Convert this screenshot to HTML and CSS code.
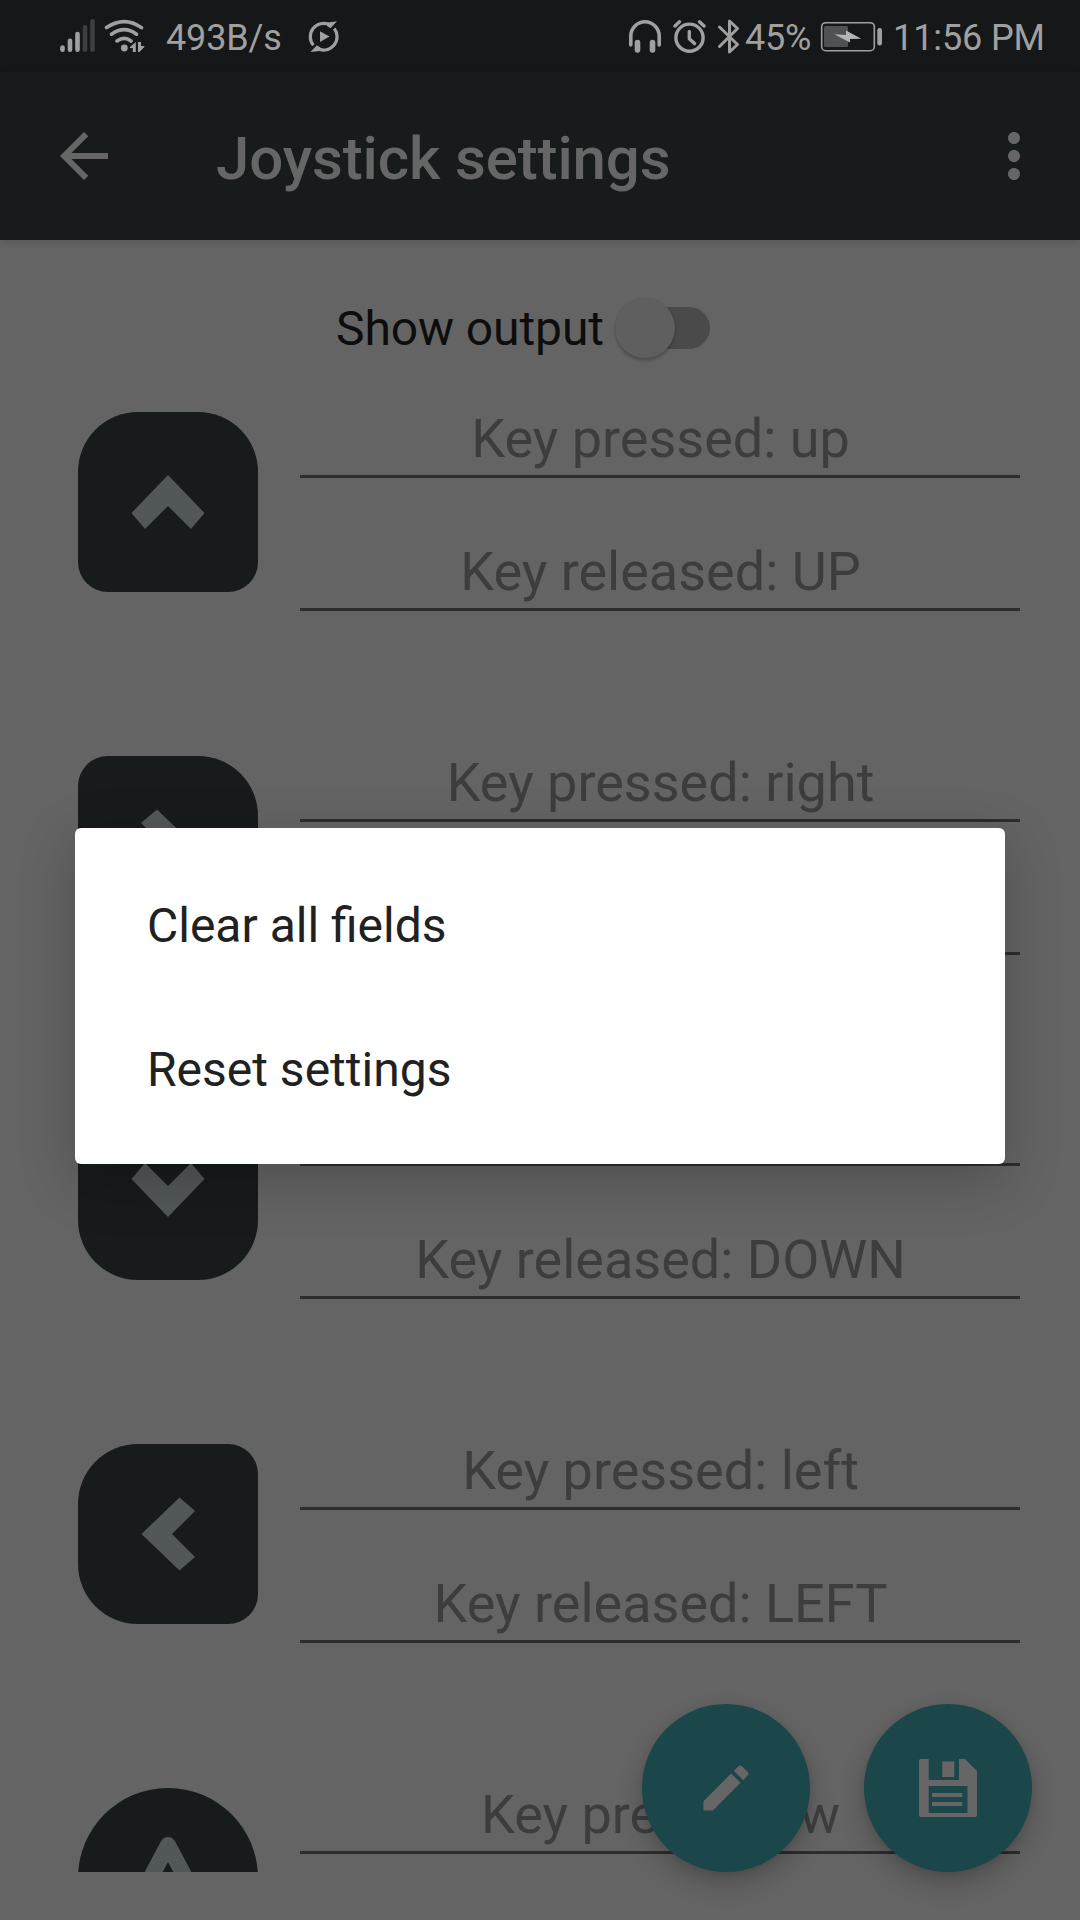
FILE: index.html
```html
<!DOCTYPE html>
<html lang="en">
<head>
<meta charset="utf-8">
<title>Joystick settings</title>
<link rel="stylesheet" href="styles.css">
</head>
<body>
<div class="screen">
  <div class="status">
    <svg class="signal" width="36" height="36" viewBox="59 18 36 36" fill="none" stroke="#a0a0a0" stroke-width="4.6" stroke-linecap="round">
      <path d="M62.5 47.5V49.7M70 40.7V49.7M77.5 34V49.7"/>
      <path stroke="#3d3e3f" d="M85 27.3V49.7M92.5 21.3V49.7"/>
    </svg>
    <svg class="wifi" width="42" height="36" viewBox="104 18 42 36" fill="none" stroke="#a0a0a0" stroke-width="3.6" stroke-linecap="round">
      <path d="M106.5 27.6Q124.3 15.5 141.5 27.6M111.5 34.2Q124.3 25.2 136.5 34.2M117 41Q124.3 35.6 131 41"/>
      <circle cx="124.3" cy="48" r="3.4" fill="#a0a0a0" stroke="none"/>
      <path fill="#a0a0a0" stroke="none" d="M135.8 42V52H132.8V48H130V47ZM138 42H141V46H144.3V47L139.5 52H138Z"/>
    </svg>
    <span class="speed">493B/s</span>
    <svg class="cast" width="34" height="36" viewBox="307 18 34 36" fill="none" stroke="#a0a0a0" stroke-width="3.2">
      <path d="M313.4 45.3A13.4 13.4 0 0 1 329.4 24.6M334.3 28.5A13.4 13.4 0 0 1 318 48.8"/>
      <path fill="#a0a0a0" stroke="none" d="M328 22.4L337 21.3L330.5 28.2L327 26ZM319.4 51L310.4 52.1L316.9 45.2L320.4 47.4ZM320 31.2V42L329.5 36.6Z"/>
    </svg>
    <svg class="phones" width="34" height="36" viewBox="628 18 34 36" fill="none" stroke="#a0a0a0" stroke-linecap="round">
      <path stroke-width="3.6" d="M630.8 45V36A14.2 14.2 0 0 1 659.2 36V45"/>
      <path stroke-width="5.6" d="M637.5 42.5V50M652.5 42.5V50"/>
    </svg>
    <svg class="alarm" width="34" height="36" viewBox="672 18 34 36" fill="none" stroke="#a0a0a0" stroke-width="3.4" stroke-linecap="round" stroke-linejoin="round">
      <circle cx="689.5" cy="37.7" r="13.6"/>
      <path d="M689.3 31.5V38.7L694.5 43.5M675 26L679.5 21.8M704 26L699.5 21.8"/>
    </svg>
    <svg class="bluetooth" width="24" height="38" viewBox="717 17 24 38" fill="none" stroke="#a0a0a0" stroke-width="3" stroke-linecap="round" stroke-linejoin="round">
      <path d="M719.5 27L737.5 44.5L729.5 52V21L737.5 28.5L719.5 46.500"/>
    </svg>
    <span class="percent">45%</span>
    <svg class="battery" width="63" height="32" viewBox="820 21 63 32">
      <rect x="821.7" y="22.7" width="52.6" height="28" rx="4" fill="none" stroke="#a0a0a0" stroke-width="1.6"/>
      <rect x="824" y="26" width="24" height="21" rx="1.5" fill="#505152"/>
      <rect x="877.3" y="28" width="4.7" height="17.5" rx="2.2" fill="#a0a0a0"/>
      <path fill="#b4b4b4" d="M834.3 34.2L846 35V30.5L861.3 38.7L850 39V42.6Z"/>
    </svg>
    <span class="clock">11:56 PM</span>
  </div>

  <header class="appbar">
    <svg width="72" height="72" viewBox="0 0 24 24" fill="#666"><path d="M20 11H7.830l5.590-5.590L12 4l-8 8 8 8 1.410-1.410L7.830 13H20v-2z"/></svg>
    <h1>Joystick settings</h1>
    <svg class="more" width="72" height="72" viewBox="0 0 24 24" fill="#666"><path d="M12 8c1.100 0 2-.9 2-2s-.9-2-2-2-2 .9-2 2 .9 2 2 2zm0 2c-1.100 0-2 .9-2 2s.9 2 2 2 2-.9 2-2-.9-2-2-2zm0 6c-1.100 0-2 .9-2 2s.9 2 2 2 2-.9 2-2-.9-2-2-2z"/></svg>
  </header>

  <main class="content">
    <div class="output">
      <span class="label">Show output</span>
      <div class="switch"><div class="thumb"></div></div>
    </div>
    <div class="rows">
      <section class="row">
        <div class="key up"><svg viewBox="0 0 180 180"><path d="M90 63L126.500 101L113 117L90 94L67 117L53.500 101Z"/></svg></div>
        <div class="fields"><div class="field">Key pressed: up</div><div class="field">Key released: UP</div></div>
      </section>
      <section class="row">
        <div class="key right"><svg viewBox="0 0 180 180"><path d="M117 90L79 126.500L63 113L86 90L63 67L79 53.500Z"/></svg></div>
        <div class="fields"><div class="field">Key pressed: right</div><div class="field">Key released: RIGHT</div></div>
      </section>
      <section class="row">
        <div class="key down"><svg viewBox="0 0 180 180"><path d="M90 117L53.500 79L67 63L90 86L113 63L126.500 79Z"/></svg></div>
        <div class="fields"><div class="field">Key pressed: down</div><div class="field">Key released: DOWN</div></div>
      </section>
      <section class="row">
        <div class="key left"><svg viewBox="0 0 180 180"><path d="M63.500 90L101.500 53.500L117 67L94 90L117 113L101.500 126.500Z"/></svg></div>
        <div class="fields"><div class="field">Key pressed: left</div><div class="field">Key released: LEFT</div></div>
      </section>
      <section class="row">
        <div class="key round"><svg viewBox="0 0 180 180"><path class="outline" d="M90 57L125 123H55Z"/></svg></div>
        <div class="fields"><div class="field">Key pressed: w</div></div>
      </section>
    </div>
  </main>

  <div class="fabs">
    <div class="fab"><svg width="60" height="60" viewBox="0 0 24 24"><path d="M3 17.250V21h3.750L17.810 9.940l-3.750-3.750L3 17.250zM20.710 7.040c.39-.39.39-1.020 0-1.410l-2.340-2.340c-.39-.39-1.020-.39-1.410 0l-1.830 1.830 3.750 3.750 1.830-1.830z"/></svg></div>
    <div class="fab"><svg width="58" height="58" viewBox="0 0 58 58"><path fill-rule="evenodd" d="M2 0H9.700V21H40V0H46L58 12V56Q58 58 56 58H2Q0 58 0 56V2Q0 0 2 0ZM9.700 27V54H48.500V27ZM23.300 2.500H35.300V18H23.300ZM13 34H43.300V38H13ZM13 43H43.300V47H13Z"/></svg></div>
  </div>

  <div class="dialog" role="dialog">
    <div class="option">Clear all fields</div>
    <div class="option">Reset settings</div>
  </div>
</div>
</body>
</html>
```

FILE: styles.css
```css
* { box-sizing: border-box; }

body {
  margin: 0;
  font-family: Roboto, sans-serif;
}

svg { display: block; flex: none; }

.screen {
  position: relative;
  width: 1080px;
  height: 1920px;
  overflow: hidden;
  background: #646464;
}

.status {
  display: flex;
  align-items: flex-start;
  height: 72px;
  padding: 18px 0 0 59px;
  background: #161718;
  color: #a0a0a0;
  font-size: 36px;
  line-height: 40px;
  white-space: nowrap;
}

.wifi { margin-left: 9px; }

.speed {
  width: 141px;
  margin-left: 20px;
  letter-spacing: -.15px;
}

.phones { margin-left: 287px; }
.alarm { margin-left: 10px; }
.bluetooth { margin: -1px 0 0 11px; }
.percent { width: 75px; margin-left: 4px; letter-spacing: -.2px; }
.battery { margin-top: 3px; }
.clock { margin-left: 10px; letter-spacing: -.1px; }

.appbar {
  position: relative;
  display: flex;
  align-items: center;
  height: 168px;
  padding: 0 30px 0 48px;
  background: #171b1c;
  box-shadow: 0 2px 8px rgba(0, 0, 0, .14);
  color: #666;
}

.appbar h1 {
  margin: 6px 0 0 96px;
  font-size: 60px;
  font-weight: 500;
  line-height: 70px;
  letter-spacing: -.12px;
}

.more { margin-left: auto; }

.content {
  height: 1632px;
  overflow: hidden;
}

.output {
  display: flex;
  align-items: center;
  height: 176px;
  padding-left: 336px;
  color: #0d0d0d;
  font-size: 48px;
}

.label {
  width: 268px;
  letter-spacing: -.1px;
  white-space: nowrap;
}

.switch {
  display: flex;
  align-items: center;
  width: 87px;
  height: 42px;
  margin-left: 19px;
  border-radius: 21px;
  background: #4a4a4a;
}

.thumb {
  width: 60px;
  height: 60px;
  margin-left: -8px;
  border-radius: 50%;
  background: #5f5f5f;
  box-shadow: 0 3px 3px rgba(0, 0, 0, .2), 0 0 2px rgba(0, 0, 0, .12);
}

.rows { margin-top: -71px; }

.row {
  display: flex;
  gap: 42px;
  height: 344px;
  padding-left: 78px;
}

.key {
  width: 180px;
  height: 180px;
  margin-top: 67px;
  background: #171b1c;
  fill: #525758;
}

.up { border-radius: 60px 60px 30px 30px; }
.right { border-radius: 30px 60px 60px 30px; }
.down { border-radius: 30px 30px 60px 60px; }
.left { border-radius: 60px 30px 30px 60px; }
.round { border-radius: 50%; }

.outline {
  fill: none;
  stroke: #525758;
  stroke-width: 16;
  stroke-linejoin: round;
}

.fields { width: 720px; }

.field {
  display: flex;
  align-items: flex-end;
  justify-content: center;
  height: 133px;
  padding: 0 0 9px 1px;
  border-bottom: 3px solid #2d2d2d;
  color: #3d3d3d;
  font-size: 54px;
  line-height: 54px;
}

.fabs {
  position: absolute;
  right: 48px;
  bottom: 48px;
  display: flex;
  gap: 54px;
}

.fab {
  display: flex;
  align-items: center;
  justify-content: center;
  width: 168px;
  height: 168px;
  border-radius: 50%;
  background: #1b474a;
  box-shadow: 0 12px 26px rgba(0, 0, 0, .2), 0 2px 8px rgba(0, 0, 0, .1);
  fill: #666;
}

.dialog {
  position: absolute;
  top: 828px;
  left: 75px;
  width: 930px;
  height: 336px;
  padding: 25px 72px 23px;
  border-radius: 6px;
  background: #fff;
  box-shadow: 0 16px 56px rgba(0, 0, 0, .22);
  color: #212121;
  font-size: 48px;
}

.option {
  display: flex;
  align-items: center;
  height: 144px;
}
```
